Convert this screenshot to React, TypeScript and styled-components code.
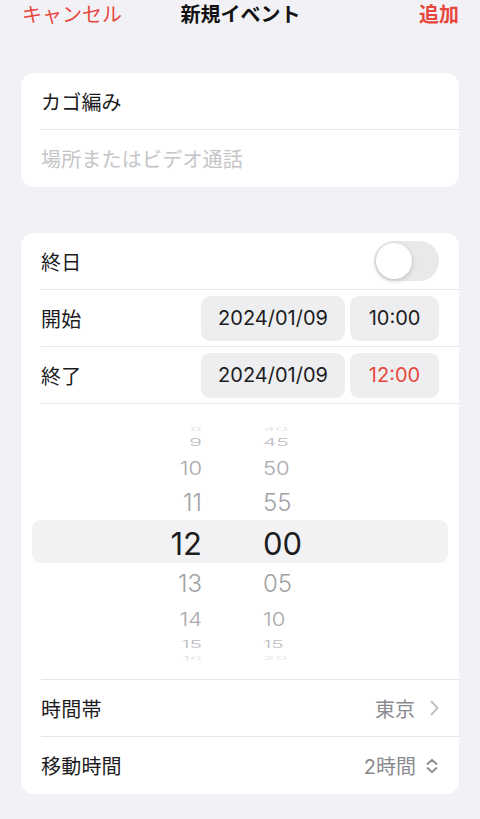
import React from "react";
import styled, { createGlobalStyle } from "styled-components";

const Global = createGlobalStyle`
  html, body { margin: 0; padding: 0; background: #f2f1f6; }
  body {
    font-family: "Inter", "Noto Sans CJK JP", sans-serif;
    color: #1c1c1e;
    -webkit-font-smoothing: antialiased;
  }
  * { box-sizing: border-box; }
`;

const Page = styled.div`
  width: 480px;
  min-height: 819px;
  background: #f2f1f6;
  display: flex;
  flex-direction: column;
`;

const NavBar = styled.div`
  height: 30px;
  padding: 0 21px 0 22px;
  display: grid;
  grid-template-columns: 1fr auto 1fr;
  align-items: center;
  font-size: 20px;
  line-height: 30px;
`;

const NavButton = styled.span<{ $bold?: boolean; $align?: "left" | "right" }>`
  color: #e8473e;
  font-weight: ${(p) => (p.$bold ? 700 : 400)};
  text-align: ${(p) => p.$align ?? "left"};
`;

const Title = styled.span`
  font-weight: 700;
  color: #111;
`;

const Card = styled.div<{ $top: number }>`
  margin: ${(p) => p.$top}px 21px 0 21px;
  background: #ffffff;
  border-radius: 13px;
  overflow: hidden;
  display: flex;
  flex-direction: column;
`;

const Row = styled.div<{ $divider?: boolean }>`
  height: 57px;
  margin-left: 20px;
  padding-right: 20px;
  display: flex;
  align-items: center;
  justify-content: space-between;
  border-bottom: ${(p) => (p.$divider ? "1px solid #e6e6ea" : "none")};
  font-size: 20px;
`;

const Label = styled.span<{ $placeholder?: boolean }>`
  color: ${(p) => (p.$placeholder ? "#c5c5c8" : "#1c1c1e")};
  font-size: 20px;
  letter-spacing: 0.2px;
`;

const Toggle = styled.div`
  width: 65px;
  height: 40px;
  border-radius: 20px;
  background: #e9e9eb;
  padding: 2px;
  display: flex;
  align-items: center;
`;

const Knob = styled.div`
  width: 36px;
  height: 36px;
  border-radius: 50%;
  background: #ffffff;
  box-shadow: 0 2px 5px rgba(0, 0, 0, 0.16), 0 0 0 0.5px rgba(0, 0, 0, 0.05);
`;

const PillGroup = styled.div`
  display: flex;
  gap: 5px;
`;

const Pill = styled.div<{ $w: number; $red?: boolean }>`
  width: ${(p) => p.$w}px;
  height: 45px;
  border-radius: 9px;
  background: #eeeef0;
  display: flex;
  align-items: center;
  justify-content: center;
  font-size: 20px;
  color: ${(p) => (p.$red ? "#e8473e" : "#1c1c1e")};
`;

const PickerArea = styled.div`
  height: 276px;
  margin-left: 20px;
  border-bottom: 1px solid #e6e6ea;
  display: grid;
  align-items: center;
`;

const Highlight = styled.div`
  grid-area: 1 / 1;
  height: 43px;
  margin: 0 11px 0 -9px;
  border-radius: 9px;
  background: #f2f2f4;
`;

const Wheel = styled.div`
  grid-area: 1 / 1;
  display: flex;
  padding-left: 101px;
  gap: 61px;
  align-self: center;
  margin-top: 3px;
`;

const WheelColumn = styled.div<{ $align: "right" | "left" }>`
  width: 60px;
  display: flex;
  flex-direction: column;
  align-items: ${(p) => (p.$align === "right" ? "flex-end" : "flex-start")};
`;

const WheelItem = styled.div<{ $h: number; $size: number; $scale: number; $color: string; $weight: number }>`
  height: ${(p) => p.$h}px;
  display: flex;
  align-items: center;
  overflow: hidden;
  font-size: ${(p) => p.$size}px;
  font-weight: ${(p) => p.$weight};
  color: ${(p) => p.$color};
  line-height: 1;
  & > span {
    display: block;
    transform: scaleY(${(p) => p.$scale});
  }
`;

const Value = styled.div<{ $gap: number }>`
  display: flex;
  align-items: center;
  gap: ${(p) => p.$gap}px;
  color: #8a8a8e;
  font-size: 20px;
`;

const Icon = styled.svg`
  display: block;
`;

const Spacer = styled.div`
  height: 24px;
`;

const wheelSpec = [
  { h: 7, size: 20, scale: 0.22, color: "#e0e0e2", weight: 300 },
  { h: 20, size: 21, scale: 0.5, color: "#bcbcbf", weight: 300 },
  { h: 31, size: 22, scale: 0.85, color: "#a9a9ac", weight: 300 },
  { h: 39, size: 24, scale: 1.02, color: "#a2a2a5", weight: 300 },
  { h: 42, size: 31, scale: 1, color: "#1d1d1f", weight: 400 },
  { h: 39, size: 24, scale: 1.02, color: "#a2a2a5", weight: 300 },
  { h: 31, size: 22, scale: 0.85, color: "#a9a9ac", weight: 300 },
  { h: 20, size: 21, scale: 0.5, color: "#bcbcbf", weight: 300 },
  { h: 7, size: 20, scale: 0.22, color: "#e0e0e2", weight: 300 },
];

const hours = ["8", "9", "10", "11", "12", "13", "14", "15", "16"];
const minutes = ["40", "45", "50", "55", "00", "05", "10", "15", "20"];

function Column({ values, align }: { values: string[]; align: "right" | "left" }) {
  return (
    <WheelColumn $align={align}>
      {values.map((v, i) => {
        const s = wheelSpec[i];
        return (
          <WheelItem key={v + i} $h={s.h} $size={s.size} $scale={s.scale} $color={s.color} $weight={s.weight}>
            <span>{v}</span>
          </WheelItem>
        );
      })}
    </WheelColumn>
  );
}

export default function App() {
  return (
    <Page>
      <Global />
      <NavBar>
        <NavButton>キャンセル</NavButton>
        <Title>新規イベント</Title>
        <NavButton $bold $align="right">追加</NavButton>
      </NavBar>

      <Card $top={43}>
        <Row $divider>
          <Label>カゴ編み</Label>
        </Row>
        <Row>
          <Label $placeholder>場所またはビデオ通話</Label>
        </Row>
      </Card>

      <Card $top={46}>
        <Row $divider>
          <Label>終日</Label>
          <Toggle>
            <Knob />
          </Toggle>
        </Row>
        <Row $divider>
          <Label>開始</Label>
          <PillGroup>
            <Pill $w={144}>2024/01/09</Pill>
            <Pill $w={89}>10:00</Pill>
          </PillGroup>
        </Row>
        <Row $divider>
          <Label>終了</Label>
          <PillGroup>
            <Pill $w={144}>2024/01/09</Pill>
            <Pill $w={89} $red>12:00</Pill>
          </PillGroup>
        </Row>
        <PickerArea>
          <Highlight />
          <Wheel>
            <Column values={hours} align="right" />
            <Column values={minutes} align="left" />
          </Wheel>
        </PickerArea>
        <Row $divider>
          <Label>時間帯</Label>
          <Value $gap={15}>
            <span>東京</span>
            <Icon width="9" height="16" viewBox="0 0 9 16" fill="none">
              <path d="M1.5 1.5 L7.5 8 L1.5 14.5" stroke="#c4c4c7" strokeWidth="2" strokeLinecap="round" strokeLinejoin="round" />
            </Icon>
          </Value>
        </Row>
        <Row>
          <Label>移動時間</Label>
          <Value $gap={9}>
            <span>2時間</span>
            <Icon width="14" height="16" viewBox="0 0 14 16" fill="none">
              <path d="M2.5 6 L7 1.8 L11.5 6 M2.5 10 L7 14.2 L11.5 10" stroke="#8a8a8e" strokeWidth="1.8" strokeLinecap="round" strokeLinejoin="round" />
            </Icon>
          </Value>
        </Row>
      </Card>
      <Spacer />
    </Page>
  );
}
